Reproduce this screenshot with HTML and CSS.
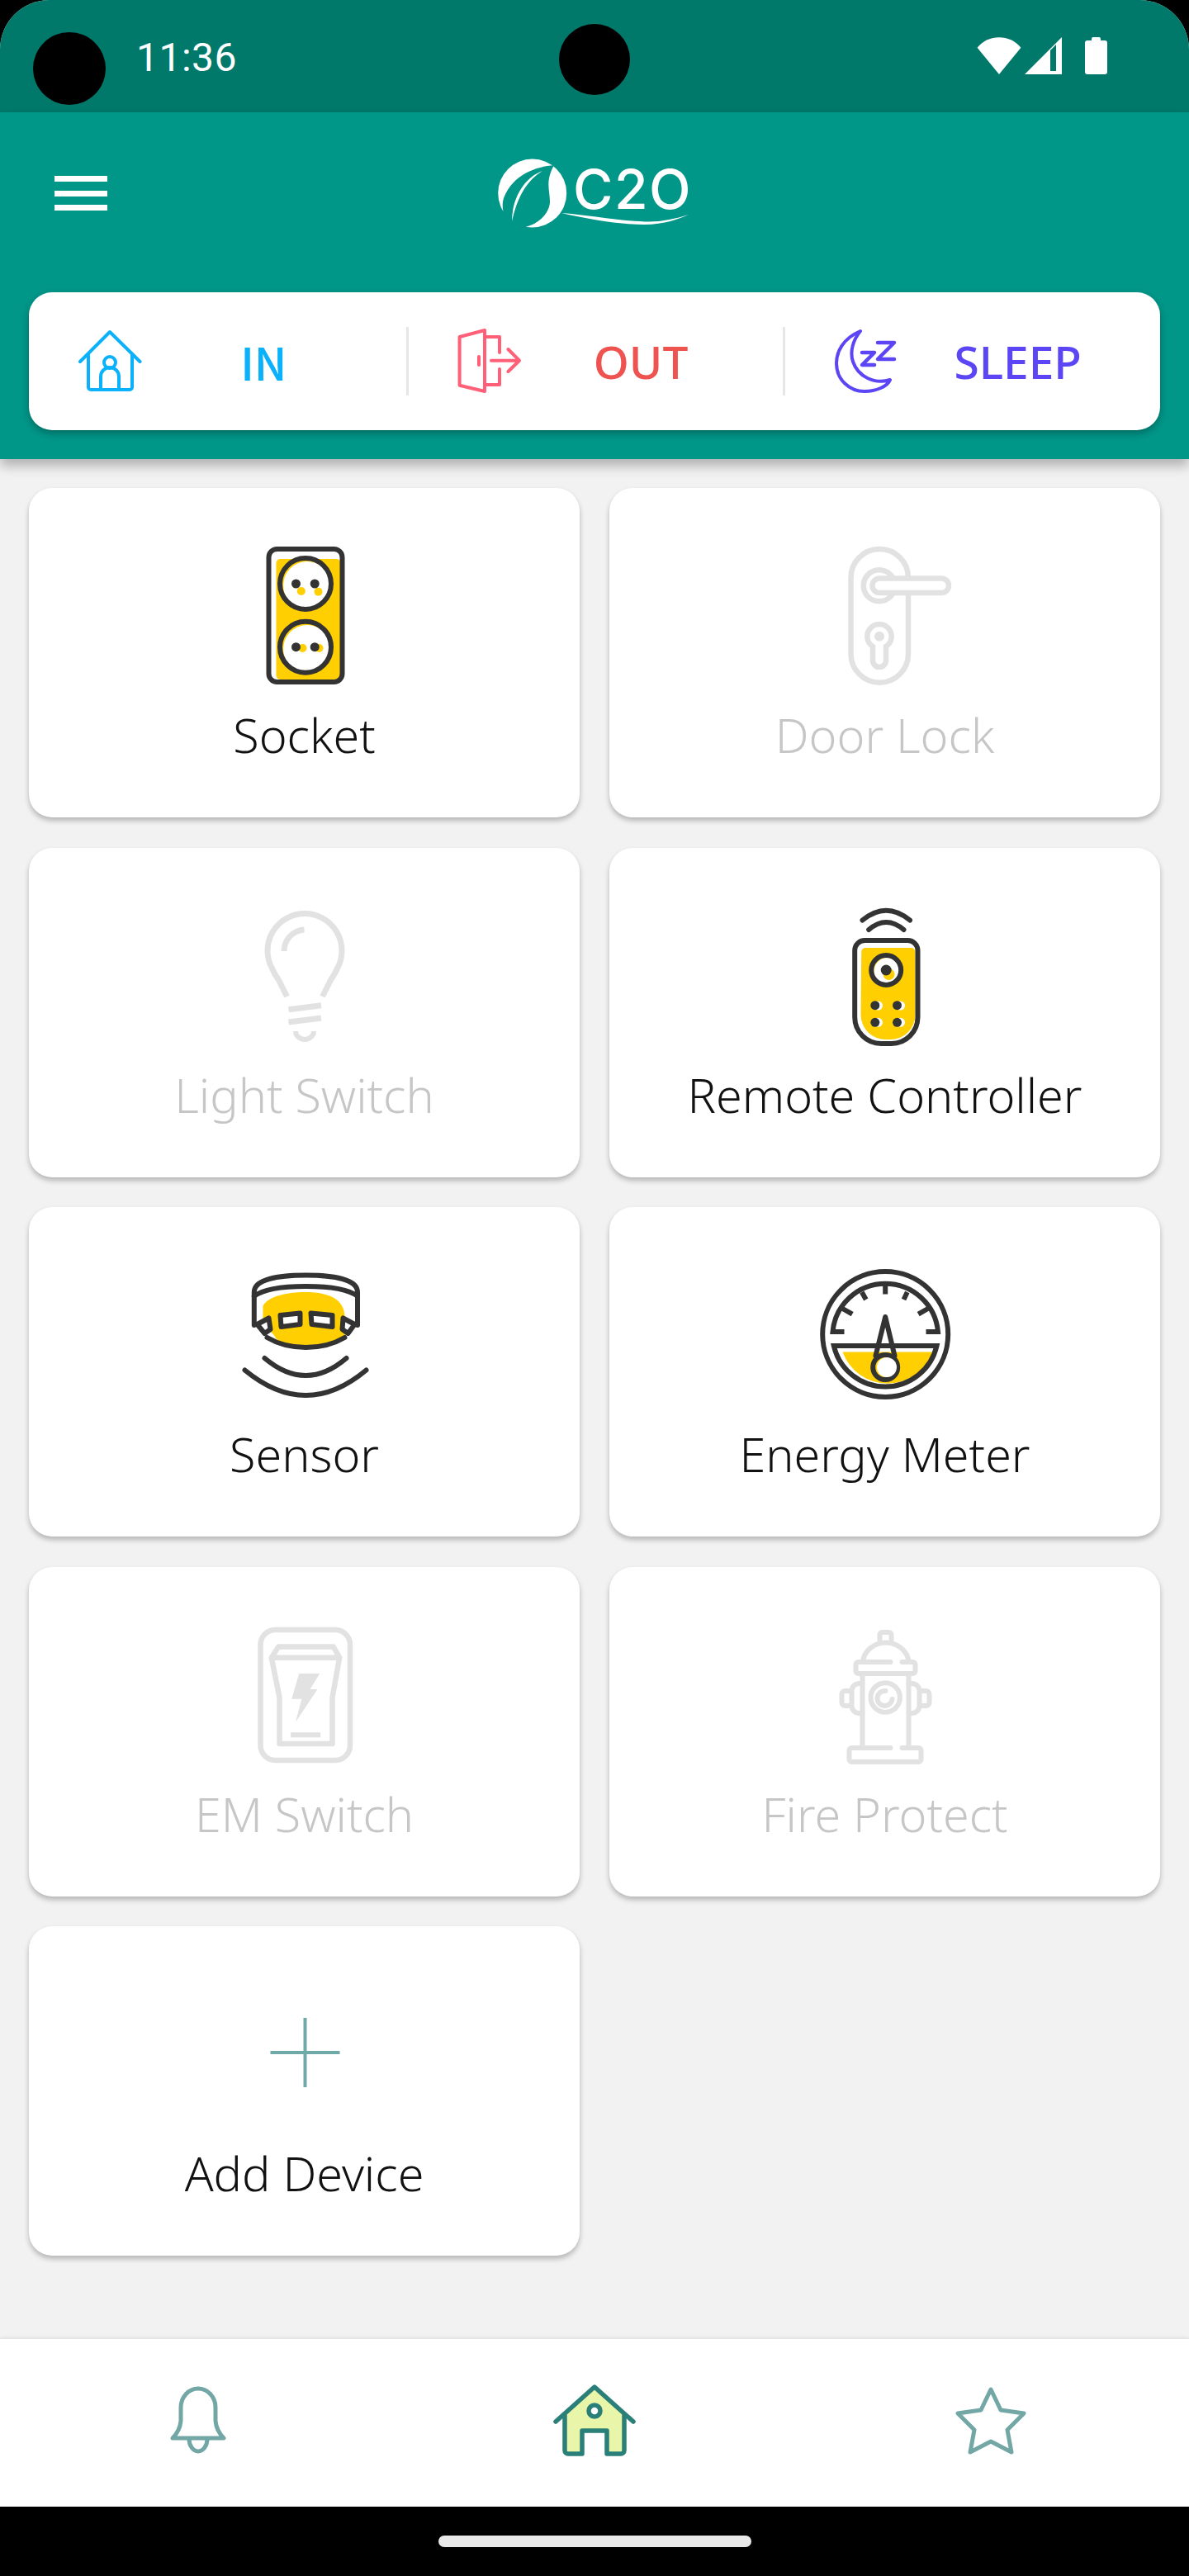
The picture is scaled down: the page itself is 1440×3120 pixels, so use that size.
FILE: index.html
```html
<!DOCTYPE html>
<html lang="en">
<head>
<meta charset="utf-8">
<title>C2O</title>
<link rel="stylesheet" href="styles.css">
</head>
<body>
<div class="app">
  <div class="status">
    <span class="time">11:36</span>
    <div class="status-icons">
      <svg class="st-wifi" viewBox="0 0 54 46"><path d="M0 13C14-4 40-4 54 13L27 46Z"/></svg>
      <svg class="st-signal" viewBox="0 0 45 45"><path d="M0 45L45 0V45Z"/><path class="slit" d="M31 16L38 9V41H31Z"/></svg>
      <svg class="st-batt" viewBox="0 0 27 45"><path d="M8 4V2a2 2 0 0 1 2-2h7a2 2 0 0 1 2 2v2h5a3 3 0 0 1 3 3v35a3 3 0 0 1-3 3H3a3 3 0 0 1-3-3V7a3 3 0 0 1 3-3Z"/></svg>
    </div>
    <span class="cam cam-left"></span>
    <span class="cam cam-center"></span>
  </div>

  <header class="header">
    <div class="toolbar">
      <div class="burger"><span></span><span></span><span></span></div>
      <svg class="logo" viewBox="0 0 320 130">
        <circle cx="84.7" cy="74" r="41.5" fill="#fff"/>
        <path fill="#009688" d="M111 40C90 42 62 50 50 80C47 90 50 100 52 104L60 112L72 116C90 113 105 100 106 85C106 70 100 60 111 40Z"/>
        <path fill="#fff" d="M97 47C75 55 60 80 60 108C65 85 75 60 97 47Z"/>
        <path fill="#fff" d="M120 98C150 105 190 112 220 112C245 112 262 105 274 100C255 106 235 110 215 108C185 107 150 100 120 98Z"/>
        <text class="logo-text" x="134" y="93">C2O</text>
      </svg>
      <div></div>
    </div>
    <div class="modes">
      <div class="mode mode-in">
        <svg class="mode-icon" viewBox="35 28 80 80"><g fill="none" stroke="#0cb1fb" stroke-width="4" stroke-linecap="round" stroke-linejoin="round"><path d="M37 68L73 32L109.500 68"/><path d="M47 60V99a3 3 0 0 0 3 3H97a3 3 0 0 0 3-3V60"/><circle cx="73" cy="69" r="7"/><path d="M62 101V86a11 11 0 0 1 22 0V101"/></g></svg>
        <span class="mode-label">IN</span>
      </div>
      <div class="mode mode-out">
        <svg class="mode-icon" viewBox="491 28 80 80"><g fill="none" stroke="#ff6078" stroke-width="4" stroke-linecap="round" stroke-linejoin="round"><path d="M495.600 38L526 30V104L495.600 96.700Z"/><path d="M526 38H544V57M544 77V96H526"/><path d="M534 66.700H566M554.400 53L568 66.700L554.400 80"/><path d="M519 62V72"/></g></svg>
        <span class="mode-label">OUT</span>
      </div>
      <div class="mode mode-sleep">
        <svg class="mode-icon" viewBox="-1 0 80 80"><g fill="none" stroke="#5b45f5" stroke-width="4" stroke-linecap="round" stroke-linejoin="round"><path d="M33 3C12 12 4 28 4 42C4 62 20 76 38 76C52 76 66 70 69 62C50 68 30 58 24 40C20 28 24 14 33 3Z"/><path d="M35 29H50L35 44H50" stroke-width="4.500"/><path d="M54 17H74L54 37H74" stroke-width="4.500"/></g></svg>
        <span class="mode-label">SLEEP</span>
      </div>
    </div>
  </header>

  <main class="devices">
    <div class="card">
      <svg class="dev-icon" viewBox="-1.500 0 220 220">
        <rect x="74" y="37" width="78" height="146" rx="5" fill="#ffcf01"/>
        <circle cx="111.500" cy="69" r="29" fill="#fff"/><circle cx="111.500" cy="146" r="29" fill="#fff"/>
        <g fill="#ffcf01"><circle cx="104.300" cy="76" r="5"/><circle cx="125" cy="76.700" r="5"/><circle cx="106" cy="145" r="5"/><circle cx="126" cy="145" r="5"/></g>
        <g fill="none" stroke="#333" stroke-width="6"><rect x="65" y="25" width="89" height="161" rx="10"/><circle cx="109.500" cy="67" r="31"/><circle cx="109.500" cy="143.700" r="31"/></g>
        <g fill="#333"><circle cx="98" cy="67" r="5.500"/><circle cx="120.700" cy="67" r="5.500"/><circle cx="98" cy="143.700" r="5.500"/><circle cx="120.700" cy="143.700" r="5.500"/></g>
      </svg>
      <span class="dev-label">Socket</span>
    </div>
    <div class="card off">
      <svg class="dev-icon" viewBox="-8.500 0 220 220">
        <g fill="none" stroke="#e2e2e2" stroke-width="6.500">
          <rect x="60" y="25" width="69.500" height="161.700" rx="34.700"/>
          <circle cx="94.300" cy="69.300" r="19"/>
          <rect x="86" y="60.500" width="92.500" height="17.500" rx="8.700" fill="#fff"/>
          <path d="M86.500 143A14.700 14.700 0 1 1 102.500 143V160a8 8 0 0 1-16 0Z"/>
        </g>
        <circle cx="94.500" cy="130.700" r="6" fill="#e2e2e2"/>
      </svg>
      <span class="dev-label">Door Lock</span>
    </div>

    <div class="card off">
      <svg class="dev-icon" viewBox="-1.500 -5 220 220">
        <g fill="none" stroke="#e2e2e2" stroke-width="7">
          <path d="M87 126L77 106Q72 99 69 92A45 45 0 1 1 148 92Q145 99 140 106L130 126"/>
          <path d="M83.500 71A26 26 0 0 1 108 45"/>
          <path d="M89 141.700L128.500 136.700M89 157L128.500 152"/>
          <path d="M97.500 168a11 10 0 0 0 22 0" stroke-width="6"/>
        </g>
      </svg>
      <span class="dev-label">Light Switch</span>
    </div>
    <div class="card">
      <svg class="dev-icon" viewBox="-8.500 -5 220 220">
        <path d="M72.700 72a5 5 0 0 1 5-5H133a5 5 0 0 1 5 5V148a30 30 0 0 1-30 30H102a30 30 0 0 1-30-30Z" fill="#ffcf01"/>
        <circle cx="104" cy="95" r="16" fill="#fff"/><circle cx="106" cy="99" r="7" fill="#ffcf01"/>
        <g fill="#fff"><circle cx="93" cy="137" r="5.500"/><circle cx="120" cy="137" r="5.500"/><circle cx="93" cy="157.300" r="5.500"/><circle cx="120" cy="157.300" r="5.500"/></g>
        <g fill="none" stroke="#333" stroke-width="6" stroke-linecap="round">
          <path d="M64.700 70a12 12 0 0 1 12-12H129a12 12 0 0 1 12 12V151a32 32 0 0 1-32 32H96.700a32 32 0 0 1-32-32Z"/>
          <circle cx="102.700" cy="94" r="18"/>
          <path d="M74 33.500Q102.700 10 131.500 33.500M81.700 45Q102.700 27 124 45"/>
        </g>
        <g fill="#333"><circle cx="102.700" cy="94" r="6.500"/><circle cx="89.300" cy="136.700" r="5.500"/><circle cx="116" cy="136.700" r="5.500"/><circle cx="89.300" cy="157.300" r="5.500"/><circle cx="116" cy="157.300" r="5.500"/></g>
      </svg>
      <span class="dev-label">Remote Controller</span>
    </div>

    <div class="card">
      <svg class="dev-icon" viewBox="-1.500 -9 220 220">
        <path d="M58 62C62 52 82 45 110 45C140 45 157 55 157 75V98C140 108 125 109 110 109C90 109 75 107 72 98L58 82Z" fill="#ffcf01"/>
        <g fill="none" stroke="#333" stroke-width="6" stroke-linecap="round" stroke-linejoin="round">
          <path d="M47.300 85V45C47.300 30 75 24.500 110 24.500C145 24.500 172.500 30 172.500 45V85"/>
          <path d="M47.300 50C60 40 85 38 110 38C135 38 160 40 172.500 50"/>
          <path d="M63 100C80 110 95 112 110 112C125 112 140 110 157 100"/>
          <path d="M79 73L103 70.500V84L80 87Z" fill="#fff"/>
          <path d="M116 70.500L142 73V87L117 84Z" fill="#fff"/>
          <path d="M51 84L65 76.500L67 90L60 95Z" fill="#fff"/>
          <path d="M169 84L155 76.500L154 90L161 95Z" fill="#fff"/>
          <path d="M60 125Q110 167 159 125M36 139.500Q110 200.500 183 139.500"/>
        </g>
      </svg>
      <span class="dev-label">Sensor</span>
    </div>
    <div class="card">
      <svg class="dev-icon" viewBox="-8.500 -9 220 220">
        <path d="M50 117.500H159A58 58 0 0 1 50 117.500Z" fill="#ffcf01"/>
        <g fill="none" stroke="#333" stroke-width="6">
          <circle cx="101.700" cy="96" r="76"/>
          <path d="M52 93H38A64 64 0 0 1 165.500 93H151"/>
          <path d="M39.300 110H164A64 64 0 0 1 39.300 110Z"/>
          <path d="M101.700 36V47.500M73.300 45L78.300 54M128.300 45L124 54M50 65L61.700 71.700M153.300 65L141.700 71.700"/>
          <path d="M90 122L101.700 75L113 122" stroke-linejoin="round" stroke-linecap="round"/>
          <circle cx="101.700" cy="136" r="15" fill="#ffcf01"/>
        </g>
        <circle cx="103.500" cy="136" r="12" fill="#fff"/>
      </svg>
      <span class="dev-label">Energy Meter</span>
    </div>

    <div class="card off">
      <svg class="dev-icon" viewBox="-1.500 -14 220 220">
        <g fill="none" stroke="#e2e2e2" stroke-width="6.500" stroke-linejoin="round">
          <rect x="55" y="13" width="108.500" height="158" rx="18"/>
          <path d="M76.700 33.500H143.300L150.700 46.700H68.300Z"/>
          <path d="M68.300 46.700L78 95V151H142V95L150.700 46.700"/>
        </g>
        <path fill="#e2e2e2" d="M101.700 66H126.700L115 85H124L97.300 125L105 96.700H92.700Z"/>
        <rect x="91.700" y="137.300" width="36" height="6" fill="#e2e2e2"/>
      </svg>
      <span class="dev-label">EM Switch</span>
    </div>
    <div class="card off">
      <svg class="dev-icon" viewBox="-8.500 -14 220 220">
        <g fill="none" stroke="#e2e2e2" stroke-width="6" stroke-linecap="round">
          <path d="M95 25V19a3 3 0 0 1 3-3H106a3 3 0 0 1 3 3V25"/>
          <path d="M74.500 51A28 26 0 0 1 130 51"/>
          <path d="M108 52H69a3 3 0 0 0-3 3V63a3 3 0 0 0 3 3H135a3 3 0 0 0 3-3V55a3 3 0 0 0-3-3H122"/>
          <path d="M74 66V155M130 66V155"/>
          <path d="M108 156H61a3 3 0 0 0-3 3V170a3 3 0 0 0 3 3H142a3 3 0 0 0 3-3V159a3 3 0 0 0-3-3H122"/>
          <path d="M74 78H70a9 9 0 0 0-9 9V105a9 9 0 0 0 9 9H74M61 87H53a4 4 0 0 0-4 4V101a4 4 0 0 0 4 4H61"/>
          <path d="M130 78H134a9 9 0 0 1 9 9V105a9 9 0 0 1-9 9H130M143 87H151a4 4 0 0 1 4 4V101a4 4 0 0 1-4 4H143"/>
          <circle cx="101.700" cy="95" r="17.700"/>
          <path d="M102 87A9 9 0 1 0 110 97"/>
        </g>
      </svg>
      <span class="dev-label">Fire Protect</span>
    </div>

    <div class="card">
      <svg class="dev-icon" viewBox="0 0 220 220">
        <path d="M68.500 104H152.500M110.500 62V146" fill="none" stroke="#6fa9a8" stroke-width="4"/>
      </svg>
      <span class="dev-label">Add Device</span>
    </div>
  </main>

  <nav class="tabs">
    <svg class="tab" viewBox="0 0 100 100"><g fill="none" stroke="#72a7a6" stroke-width="5" stroke-linejoin="round" stroke-linecap="round"><path d="M19 71Q28 62 29 50V34a21 23 0 0 1 42 0V50Q72 62 81 71Z"/><path d="M39 72a11 15 0 0 0 22 0"/></g></svg>
    <svg class="tab" viewBox="0 0 100 100">
      <path fill="#e9f6a9" d="M14 44L50 12L86 44V88H65V62H35V88H14Z"/>
      <circle cx="50" cy="38" r="7" fill="#fff"/>
      <g fill="none" stroke="#2a7f78" stroke-width="5.500" stroke-linecap="round" stroke-linejoin="round">
        <path d="M3 51L50 9L97 51"/>
        <path d="M14 44V86a4 4 0 0 0 4 4H35V62H65V90H82a4 4 0 0 0 4-4V44"/>
        <circle cx="50" cy="38" r="7"/>
      </g>
    </svg>
    <svg class="tab" viewBox="0 0 100 100"><path fill="none" stroke="#72a7a6" stroke-width="5" stroke-linejoin="round" d="M50 12L62 37L90 41L70 61L75 88L50 75L25 88L30 61L10 41L38 37Z"/></svg>
  </nav>
</div>
<div class="gesture"><span class="pill"></span></div>
</body>
</html>
```

FILE: styles.css
```css
* { box-sizing: border-box; }
html, body { margin: 0; padding: 0; }
body {
  width: 1440px;
  height: 3120px;
  overflow: hidden;
  background: #000;
  display: flex;
  flex-direction: column;
  font-family: "Noto Sans", "Noto Sans CJK KR", sans-serif;
}
.app {
  height: 3036px;
  display: flex;
  flex-direction: column;
  background: #f2f2f2;
  border-radius: 60px 60px 0 0;
  overflow: hidden;
}
.status {
  position: relative;
  height: 136px;
  flex: none;
  background: #00796b;
  display: flex;
  align-items: flex-start;
  justify-content: space-between;
  padding: 42px 99px 0 165px;
}
.time {
  font-family: Roboto, sans-serif;
  font-size: 48px;
  line-height: 56px;
  color: #fff;
  letter-spacing: 0.5px;
}
.status-icons { display: flex; gap: 4px; padding-top: 3px; }
.status-icons svg { display: block; fill: #fff; height: 45px; }
.st-wifi { width: 54px; }
.st-signal { width: 45px; }
.st-batt { width: 27px; margin-left: 24px; }
.slit { fill: #00796b; }
.cam { position: absolute; background: #000; border-radius: 50%; }
.cam-left { left: 40px; top: 39px; width: 88px; height: 88px; }
.cam-center { left: 677px; top: 29px; width: 86px; height: 86px; }

.header {
  position: relative;
  z-index: 2;
  flex: none;
  background: #009688;
  padding: 24px 35px 35px;
  box-shadow: 0 8px 14px rgba(0, 0, 0, 0.28);
}
.toolbar {
  display: grid;
  grid-template-columns: 1fr 320px 1fr;
  align-items: center;
  height: 130px;
  margin-bottom: 64px;
}
.burger {
  display: flex;
  flex-direction: column;
  gap: 10.500px;
  margin-left: 31px;
  width: 64px;
  margin-top: 18px;
}
.burger span { height: 7px; background: #fff; }
.logo { display: block; width: 320px; height: 130px; }
.logo-text {
  font-family: Inter, sans-serif;
  font-size: 66px;
  font-weight: 500;
  letter-spacing: 1.5px;
  fill: #fff;
}
.modes {
  display: grid;
  grid-template-columns: repeat(3, 1fr);
  align-items: center;
  height: 167px;
  background: #fff;
  border-radius: 28px;
  box-shadow: 0 4px 8px rgba(0, 0, 0, 0.28);
}
.mode {
  display: flex;
  align-items: center;
  height: 83px;
  padding: 0 28px 0 60px;
}
.mode + .mode { border-left: 3px solid #e6e6e6; padding-left: 57px; }
.mode-icon { display: block; width: 80px; height: 80px; flex: none; }
.mode-label {
  flex: 1;
  text-align: center;
  font-size: 55px;
  font-weight: 500;
  line-height: 60px;
}
.mode-in .mode-label {
  color: #0cb1fb;
  font-family: "Noto Sans CJK KR", sans-serif;
  font-size: 54px;
}
.mode-out .mode-label { color: #ef5350; }
.mode-sleep .mode-label { color: #5b45f5; }

.devices {
  flex: 1;
  display: grid;
  grid-template-columns: 1fr 1fr;
  grid-auto-rows: 399px;
  align-content: start;
  column-gap: 36px;
  row-gap: 36.500px;
  padding: 35px;
}
.card {
  display: flex;
  flex-direction: column;
  align-items: center;
  padding-top: 49px;
  background: #fff;
  border-radius: 28px;
  box-shadow: 0 4px 6px rgba(0, 0, 0, 0.25);
}
.dev-icon { display: block; width: 220px; height: 220px; flex: none; }
.dev-label {
  font-size: 57.500px;
  line-height: 60px;
  font-weight: 300;
  color: #111;
}
.off .dev-label { color: #c6c6c6; }

.tabs {
  flex: none;
  height: 203px;
  background: #fff;
  display: grid;
  grid-template-columns: repeat(3, 1fr);
  align-items: center;
  justify-items: center;
  box-shadow: 0 -2px 4px rgba(0, 0, 0, 0.07);
  position: relative;
}
.tab { display: block; width: 100px; height: 100px; margin-top: -5px; }

.gesture {
  flex: 1;
  display: flex;
  justify-content: center;
  padding-top: 35px;
}
.pill {
  width: 379px;
  height: 14px;
  border-radius: 7px;
  background: #e9e9e9;
}
```
